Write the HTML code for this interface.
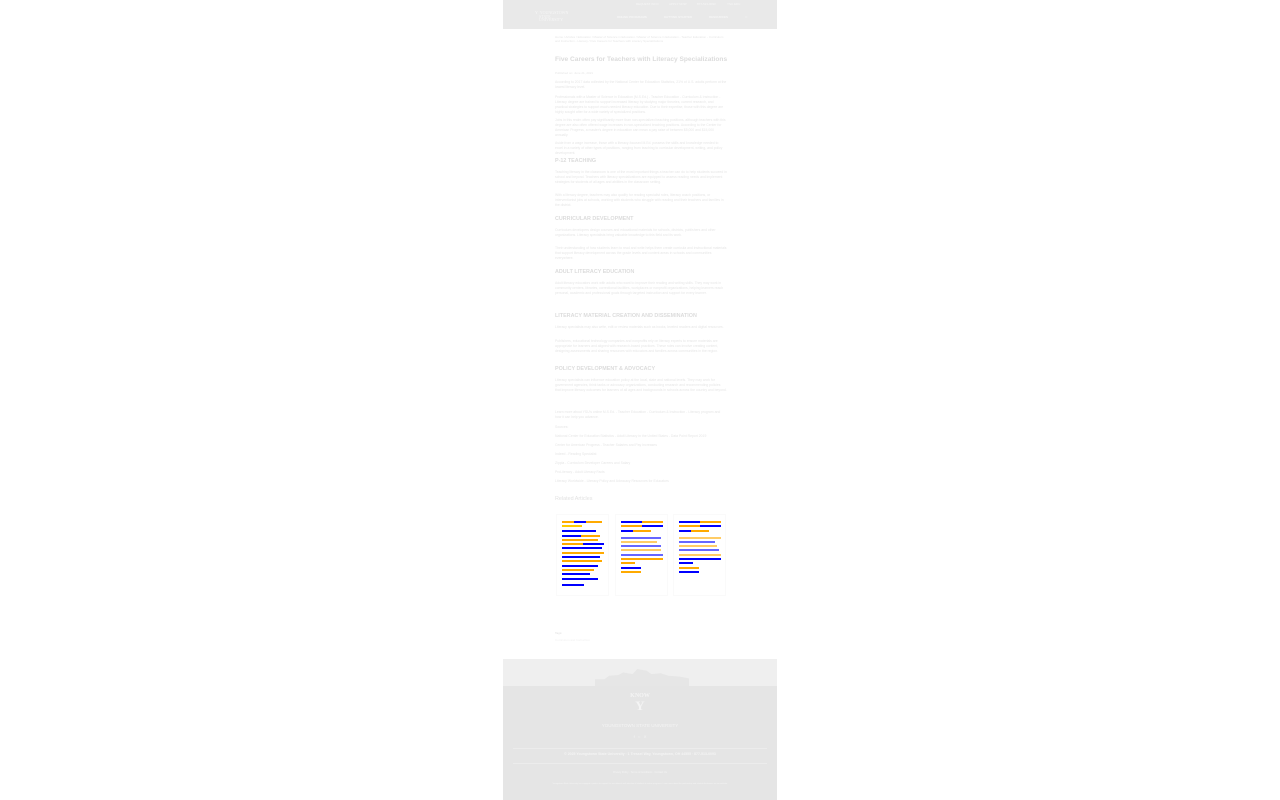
<!DOCTYPE html>
<html><head><meta charset="utf-8"><style>
*{margin:0;padding:0;box-sizing:border-box}
body{width:1280px;height:800px;background:#fff;font-family:"Liberation Sans",sans-serif;position:relative;overflow:hidden}
.col{position:absolute;left:503px;width:274px;top:0;height:800px;background:#fff}
.hdr{position:absolute;left:0;top:0;width:274px;height:29px;background:#e9e9e9}
.a{position:absolute;color:#e6e6e6;font-size:3.4px;line-height:4.9px;white-space:normal}
.n{position:absolute;color:#f6f6f6;font-size:3px;white-space:nowrap}
.p{left:52px;width:172px}
.h{position:absolute;left:52px;color:#dcdcdc;font-weight:bold}
.card{position:absolute;top:514px;width:53px;height:82px;background:#fff;border:1px solid #fafafa}
.b{height:2px;margin:0 0 2.3px 0}
.foot1{position:absolute;left:0;top:659px;width:274px;height:27px;background:#efefef}
.foot2{position:absolute;left:0;top:686px;width:274px;height:114px;background:#e5e5e5}
.ft{position:absolute;left:0;width:274px;text-align:center;color:#f4f4f4}
</style></head><body>
<div class="col">
<div class="hdr">
<div class="n" style="left:133px;top:2px">REQUEST INFO</div>
<div class="n" style="left:166px;top:2px">APPLY NOW</div>
<div class="n" style="left:194px;top:2px">877-513-0093</div>
<div class="n" style="left:224px;top:2px">YSU.EDU</div>
<div class="a" style="left:32px;top:11px;color:#f6f6f6;font-size:4px;line-height:3.6px;font-family:'Liberation Serif',serif;white-space:nowrap">Y&nbsp; YOUNGSTOWN<br>&nbsp;&nbsp;&nbsp; STATE<br>&nbsp;&nbsp;&nbsp; UNIVERSITY</div>
<div class="n" style="left:114px;top:15px;font-weight:bold">ONLINE PROGRAMS</div>
<div class="n" style="left:161px;top:15px;font-weight:bold">GETTING STARTED</div>
<div class="n" style="left:206px;top:15px;font-weight:bold">RESOURCES</div>
<div class="n" style="left:242px;top:14px;font-size:4px">&#9675;</div>
</div>
<div class="a p" style="top:35px;font-size:3px;line-height:4px">Home / Articles / Education / Master of Science in Education / Master of Science in Education - Teacher Education - Curriculum and Instruction - Literacy / Five Careers for Teachers with Literacy Specializations</div>
<div class="h" style="top:56px;font-size:6.6px;width:180px;white-space:nowrap">Five Careers for Teachers with Literacy Specializations</div>
<div class="a p" style="top:71px;font-size:3px">Published on: June 21, 2021</div>
<div class="a p" style="top:80px">According to 2017 data collected by the National Center for Education Statistics, 21% of U.S. adults perform at the lowest literacy level.</div>
<div class="a p" style="top:95px">Professionals with a Master of Science in Education (M.S.Ed.) - Teacher Education - Curriculum &amp; Instruction - Literacy degree are trained to support increased literacy by studying major theories, current research, and practical strategies to support much-needed literacy education. Due to their expertise, those with this degree are highly sought after for a wide variety of specialized positions.</div>
<div class="a p" style="top:118px">Jobs in this realm often pay significantly more than non-specialized teaching positions, although teachers with this degree are also often offered wage increases in non-specialized teaching positions. According to the Center for American Progress, a master's degree in education can mean a pay raise of between $5,000 and $15,000 annually.</div>
<div class="a p" style="top:141px">Aside from a wage increase, those with a literacy-focused M.Ed. possess the skills and knowledge needed to excel in a variety of other types of positions, ranging from teaching to curricular development, writing, and policy development.</div>
<div class="h" style="top:158px;font-size:5.4px">P-12 TEACHING</div>
<div class="a p" style="top:170px">Teaching literacy in the classroom is one of the most important things a teacher can do to help students succeed in school and beyond. Teachers with literacy specializations are equipped to assess reading needs and implement strategies for students of all ages and abilities in the classroom setting.</div>
<div class="a p" style="top:193px">With a literacy degree, teachers may also qualify for reading specialist roles, literacy coach positions, or interventionist jobs at schools, working with students who struggle with reading and their teachers and families in the district.</div>
<div class="h" style="top:216px;font-size:5.4px">CURRICULAR DEVELOPMENT</div>
<div class="a p" style="top:228px">Curriculum developers design courses and educational materials for schools, districts, publishers and other organizations. Literacy specialists bring valuable knowledge to this field and its work.</div>
<div class="a p" style="top:246px">Their understanding of how students learn to read and write helps them create curricula and instructional materials that support literacy development across the grade levels and content areas in schools and communities everywhere.</div>
<div class="h" style="top:269px;font-size:5.4px">ADULT LITERACY EDUCATION</div>
<div class="a p" style="top:281px">Adult literacy educators work with adults who want to improve their reading and writing skills. They may work in community centers, libraries, correctional facilities, workplaces or nonprofit organizations, helping learners reach personal, academic and professional goals through targeted instruction and support for every learner.</div>
<div class="h" style="top:313px;font-size:5.4px">LITERACY MATERIAL CREATION AND DISSEMINATION</div>
<div class="a p" style="top:325px">Literacy specialists may also write, edit or review materials such as books, leveled readers and digital resources.</div>
<div class="a p" style="top:339px">Publishers, educational technology companies and nonprofits rely on literacy experts to ensure materials are appropriate for learners and aligned with research-based practices. These roles can involve creating content, designing assessments and sharing resources with educators and families across communities in the region.</div>
<div class="h" style="top:366px;font-size:5.4px">POLICY DEVELOPMENT &amp; ADVOCACY</div>
<div class="a p" style="top:378px">Literacy specialists can influence education policy at the local, state and national levels. They may work for government agencies, think tanks or advocacy organizations, conducting research and recommending policies that improve literacy outcomes for learners of all ages and backgrounds in schools across the country and beyond.</div>
<div class="a p" style="top:410px">Learn more about YSU's online M.S.Ed. - Teacher Education - Curriculum &amp; Instruction - Literacy program and how it can help you advance.</div>
<div class="a p" style="top:425px">Sources:</div>
<div class="a p" style="top:434px">National Center for Education Statistics - Adult Literacy in the United States - Data Point Report 2019</div>
<div class="a p" style="top:443px">Center for American Progress - Teacher Salaries and Pay Increases</div>
<div class="a p" style="top:452px">Indeed - Reading Specialist</div>
<div class="a p" style="top:461px">Zippia - Curriculum Developer Careers and Salary</div>
<div class="a p" style="top:470px">ProLiteracy - Adult Literacy Facts</div>
<div class="a p" style="top:479px">Literacy Worldwide - Literacy Policy and Advocacy Resources for Educators</div>
<div class="h" style="top:496px;font-size:5.4px;color:#e2e2e2;font-weight:normal">Related Articles</div>
<div class="card" style="left:53px">
<div style="padding:6px 4px 0 5px">
<div class="b" style="background:linear-gradient(90deg,#fa0 0 30%,#00f 30% 60%,#fa0 60%);width:40px"></div>
<div class="b" style="background:#fc0;width:20px"></div>
<div class="b" style="background:#00f;width:34px;margin-top:3px"></div>
<div class="b" style="background:linear-gradient(90deg,#00f 0 50%,#fa0 50%);width:38px"></div>
<div class="b" style="background:#fa0;width:36px"></div>
<div class="b" style="background:linear-gradient(90deg,#fa0 0 50%,#00f 50%);width:42px"></div>
<div class="b" style="background:#00f;width:40px"></div>
<div class="b" style="background:#fa0;width:42px"></div>
<div class="b" style="background:#00f;width:38px"></div>
<div class="b" style="background:#fa0;width:40px"></div>
<div class="b" style="background:#00f;width:36px"></div>
<div class="b" style="background:#fa0;width:32px"></div>
<div class="b" style="background:#00f;width:28px"></div>
<div class="b" style="background:#00f;width:36px"></div>
<div class="b" style="background:#00f;width:22px;margin-top:4px"></div>
</div></div>
<div class="card" style="left:112px">
<div style="padding:6px 4px 0 5px">
<div class="b" style="background:linear-gradient(90deg,#00f 0 50%,#fa0 50%);width:42px"></div>
<div class="b" style="background:linear-gradient(90deg,#fa0 0 50%,#00f 50%);width:42px"></div>
<div class="b" style="background:linear-gradient(90deg,#00f 0 40%,#fa0 40%);width:30px"></div>
<div class="b" style="background:#00f;width:40px;margin-top:5px;opacity:.6"></div>
<div class="b" style="background:#fa0;width:36px;opacity:.6"></div>
<div class="b" style="background:#00f;width:40px;opacity:.6"></div>
<div class="b" style="background:#fa0;width:40px;opacity:.6"></div>
<div class="b" style="background:#00f;width:42px;opacity:.6"></div>
<div class="b" style="background:#fa0;width:42px"></div>
<div class="b" style="background:#fa0;width:14px"></div>
<div class="b" style="background:#00f;width:20px"></div>
<div class="b" style="background:#fa0;width:20px"></div>
</div></div>
<div class="card" style="left:170px">
<div style="padding:6px 4px 0 5px">
<div class="b" style="background:linear-gradient(90deg,#00f 0 50%,#fa0 50%);width:42px"></div>
<div class="b" style="background:linear-gradient(90deg,#fa0 0 50%,#00f 50%);width:42px"></div>
<div class="b" style="background:linear-gradient(90deg,#00f 0 40%,#fa0 40%);width:30px"></div>
<div class="b" style="background:#fa0;width:42px;margin-top:5px;opacity:.6"></div>
<div class="b" style="background:#00f;width:36px;opacity:.6"></div>
<div class="b" style="background:#fa0;width:38px;opacity:.6"></div>
<div class="b" style="background:#00f;width:40px;opacity:.6"></div>
<div class="b" style="background:#fa0;width:42px;opacity:.6"></div>
<div class="b" style="background:#00f;width:42px"></div>
<div class="b" style="background:#00f;width:14px"></div>
<div class="b" style="background:#fa0;width:20px"></div>
<div class="b" style="background:#00f;width:20px"></div>
</div></div>
<div class="a" style="left:52px;top:631px;font-size:3px;color:#ddd">Tags:</div>
<div class="a" style="left:52px;top:638px;font-size:3px;color:#f0f0f0">Curriculum and Instruction</div>
<div class="foot1"><div style="position:absolute;left:92px;top:10px;width:94px;height:17px;background:#e6e6e6;clip-path:polygon(0 60%,10% 60%,15% 40%,25% 35%,30% 20%,40% 30%,45% 0,55% 10%,60% 30%,70% 25%,78% 40%,90% 45%,100% 55%,100% 100%,0 100%)"></div></div>
<div class="foot2">
<div class="ft" style="top:7px;font-size:6px;font-weight:bold;font-family:'Liberation Serif',serif">KNOW</div>
<div class="ft" style="top:13px;font-size:13px;font-weight:bold;font-family:'Liberation Serif',serif;line-height:14px">Y</div>
<div class="ft" style="top:37px;font-size:4.5px">YOUNGSTOWN STATE UNIVERSITY</div>
<div class="ft" style="top:48px;font-size:4px">f &nbsp; &#9675; &nbsp; X</div>
<div style="position:absolute;left:10px;top:62px;width:254px;height:1px;background:#ececec"></div>
<div class="ft" style="top:66px;font-size:3.5px;font-weight:bold">© 2025 Youngstown State University · 1 Tressel Way, Youngstown, OH 44555 · 877-513-0093</div>
<div style="position:absolute;left:10px;top:77px;width:254px;height:1px;background:#ececec"></div>
<div class="ft" style="top:85px;font-size:2.5px">Privacy Policy · Terms &amp; Conditions · Contact Us</div>
<div class="ft" style="top:97px;font-size:2px;line-height:3px;padding:0 30px">Youngstown State University has engaged a partner to support the recruitment and retention of students in online programs. Learn more about the partnership and related disclosures on our website.</div>
</div>
</div>
</body></html>
